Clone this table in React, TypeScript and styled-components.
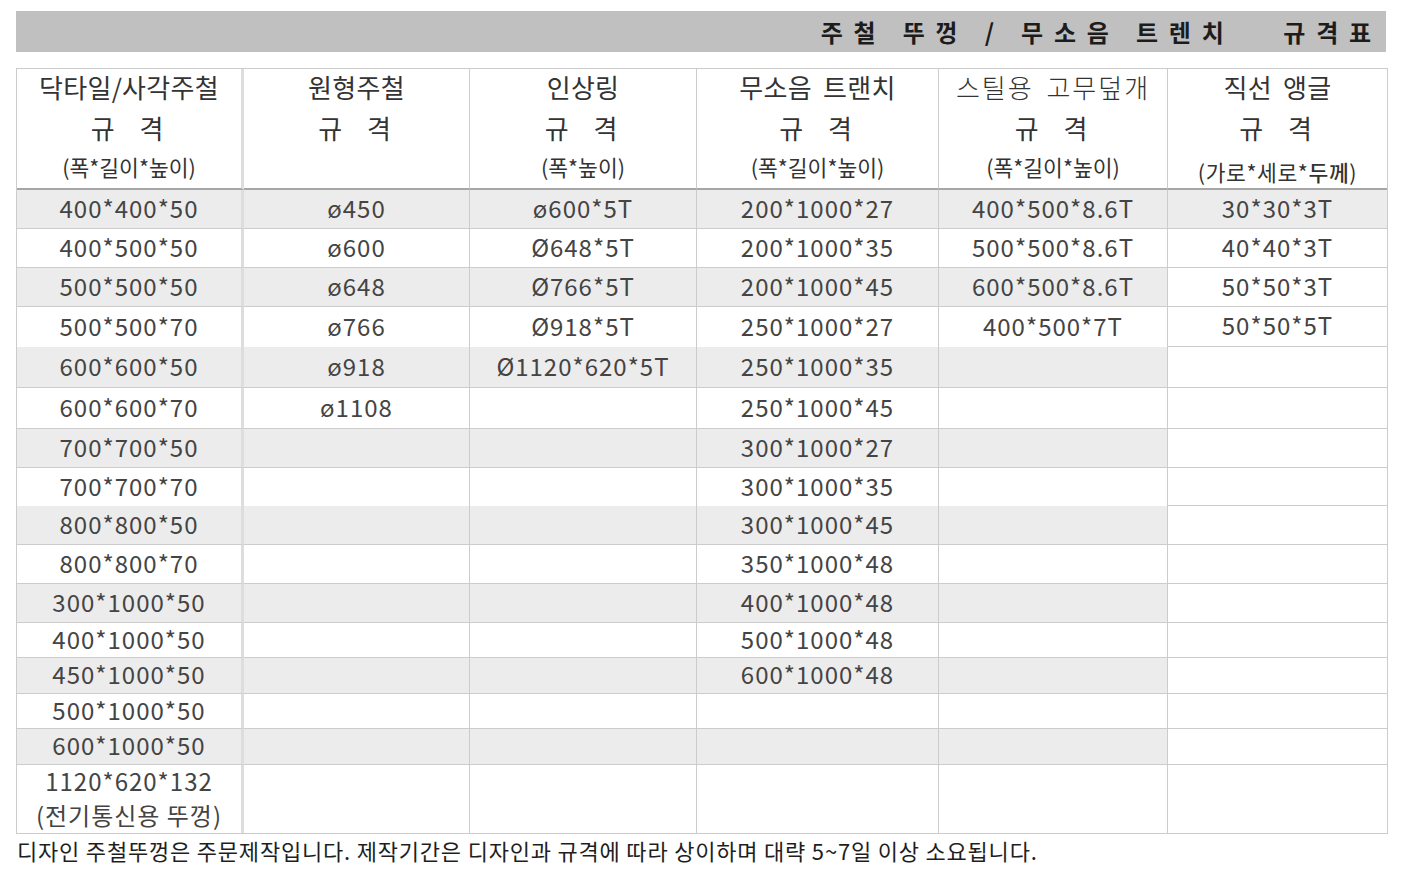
import React from "react";
import styled, { createGlobalStyle } from "styled-components";

const Global = createGlobalStyle`
  html, body { margin: 0; padding: 0; background: #ffffff; }
  body { font-family: "Noto Sans CJK KR", "Noto Sans", sans-serif; }
`;

const Page = styled.div`
  padding: 11px 0 0 16px;
  width: 1372px;
`;

const TitleBar = styled.div`
  width: 1370px;
  height: 41px;
  background: #c0c0c0;
  display: flex;
  align-items: center;
  justify-content: flex-end;
  padding-right: 4px;
  box-sizing: border-box;
`;

const TitleText = styled.h1`
  margin: 0;
  font-size: 24px;
  font-weight: 700;
  color: #1c1c1c;
  letter-spacing: 10.8px;
  white-space: pre;
  line-height: 41px;
`;

const Grid = styled.div`
  margin-top: 16px;
  display: grid;
  grid-template-columns: 227px 226px 227px 242px 229px 219px;
  grid-template-rows: 121px 39px 39px 39px 40px 41px 41px 39px 38px 39px 39px 39px 35px 36px 35px 36px 68px;
  border: 1px solid #cccccc;
  width: 1372px;
  box-sizing: border-box;
`;

type Divider = "thick" | "thin" | "none";

const dividerCss = (d: Divider) =>
  d === "thick" ? "3px solid #dddddd" : d === "thin" ? "1px solid #cccccc" : "none";

const HeadCell = styled.div<{ $div: Divider }>`
  box-sizing: border-box;
  border-right: ${(p) => dividerCss(p.$div)};
  border-bottom: 2px solid #a6a6a6;
  display: flex;
  flex-direction: column;
  align-items: center;
  color: #333333;
`;

const HeadLine = styled.div<{ $light?: boolean }>`
  height: 40px;
  line-height: 36px;
  font-size: 26px;
  letter-spacing: ${(p) => (p.$light ? "2px" : "0.3px")};
  word-spacing: 5px;
  font-weight: ${(p) => (p.$light ? 300 : 400)};
  white-space: pre;
`;

const HeadSpec = styled.div`
  height: 40px;
  line-height: 38px;
  font-size: 26px;
  word-spacing: 19px;
  padding-right: 4px;
  white-space: pre;
`;

const HeadUnit = styled.div<{ $wide?: boolean }>`
  height: 39px;
  line-height: ${(p) => (p.$wide ? "46px" : "36px")};
  font-size: 21.5px;
  letter-spacing: ${(p) => (p.$wide ? "0.6px" : "0")};
  white-space: pre;
`;

const Strong = styled.span`
  font-weight: 500;
`;

const Cell = styled.div<{ $div: Divider; $shade: boolean; $line: boolean }>`
  box-sizing: border-box;
  border-right: ${(p) => dividerCss(p.$div)};
  border-bottom: ${(p) => (p.$line ? "1px solid #cccccc" : "none")};
  background: ${(p) => (p.$shade ? "#ececec" : "#ffffff")};
  display: flex;
  flex-direction: column;
  align-items: center;
  justify-content: center;
  padding-bottom: 3px;
  text-align: center;
  font-size: 24px;
  letter-spacing: 1px;
  color: #444444;
  line-height: 34px;
  white-space: pre;
`;

const Note = styled.p`
  margin: 0;
  font-size: 22px;
  letter-spacing: 0.8px;
  line-height: 32px;
  color: #1e1e1e;
  padding-left: 1px;
`;

const dividers: Divider[] = ["thick", "thin", "thin", "thin", "thin", "none"];

const headers = [
  { title: "닥타일/사각주철", unit: "(폭*길이*높이)" },
  { title: "원형주철", unit: "" },
  { title: "인상링", unit: "(폭*높이)" },
  { title: "무소음 트랜치", unit: "(폭*길이*높이)" },
  { title: "스틸용 고무덮개", unit: "(폭*길이*높이)", light: true },
  { title: "직선 앵글", unit: "", special: true },
];

const columns: string[][] = [
  [
    "400*400*50", "400*500*50", "500*500*50", "500*500*70", "600*600*50", "600*600*70",
    "700*700*50", "700*700*70", "800*800*50", "800*800*70", "300*1000*50", "400*1000*50",
    "450*1000*50", "500*1000*50", "600*1000*50", "1120*620*132\n(전기통신용 뚜껑)",
  ],
  ["ø450", "ø600", "ø648", "ø766", "ø918", "ø1108"],
  ["ø600*5T", "Ø648*5T", "Ø766*5T", "Ø918*5T", "Ø1120*620*5T"],
  [
    "200*1000*27", "200*1000*35", "200*1000*45", "250*1000*27", "250*1000*35", "250*1000*45",
    "300*1000*27", "300*1000*35", "300*1000*45", "350*1000*48", "400*1000*48", "500*1000*48",
    "600*1000*48",
  ],
  ["400*500*8.6T", "500*500*8.6T", "600*500*8.6T", "400*500*7T"],
  ["30*30*3T", "40*40*3T", "50*50*3T", "50*50*5T"],
];

const ROW_COUNT = 16;
const NO_LINE_ROWS = [3, 7];

export default function App() {
  const rows = Array.from({ length: ROW_COUNT }, (_, r) => r);
  return (
    <>
      <Global />
      <Page>
        <TitleBar>
          <TitleText>{"주철 뚜껑 / 무소음 트렌치   규격표"}</TitleText>
        </TitleBar>
        <Grid>
          {headers.map((h, c) => (
            <HeadCell key={`h${c}`} $div={dividers[c]}>
              <HeadLine $light={h.light}>{h.title}</HeadLine>
              <HeadSpec>규 격</HeadSpec>
              {h.special ? (
                <HeadUnit $wide>
                  (가로*세로*<Strong>두께</Strong>)
                </HeadUnit>
              ) : (
                <HeadUnit>{h.unit}</HeadUnit>
              )}
            </HeadCell>
          ))}
          {rows.map((r) =>
            columns.map((col, c) => {
              const last = r === ROW_COUNT - 1;
              const shade = c === 5 ? r === 0 : r % 2 === 0;
              const line = !last && (c === 5 || !NO_LINE_ROWS.includes(r));
              return (
                <Cell key={`${r}-${c}`} $div={dividers[c]} $shade={shade} $line={line}>
                  {col[r] ?? ""}
                </Cell>
              );
            })
          )}
        </Grid>
        <Note>
          디자인 주철뚜껑은 주문제작입니다. 제작기간은 디자인과 규격에 따라 상이하며 대략 5~7일 이상 소요됩니다.
        </Note>
      </Page>
    </>
  );
}
